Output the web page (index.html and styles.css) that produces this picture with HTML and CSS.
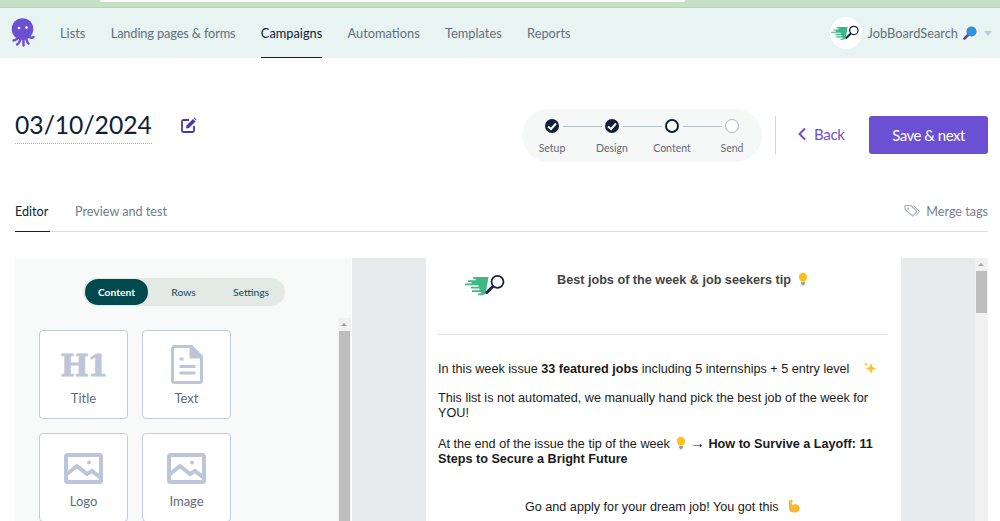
FILE: index.html
```html
<!DOCTYPE html>
<html lang="en">
<head>
<meta charset="utf-8">
<title>Campaign editor</title>
<link rel="stylesheet" href="styles.css">
<svg class="defs" width="0" height="0" aria-hidden="true">
  <defs>
    <symbol id="brand" viewBox="0 0 41 23">
      <path fill="#3fb984" d="M8 3h15.500l-2.800 16.800-3.200 1.400H13v-1.600h3.200v-1.700H7v-1.700h7.500v-1.700H6v-1.700h7.500v-1.500H0V9.600h6.500V8H3V6.300h7.500V4.800H8z"/>
      <circle cx="32.500" cy="7.800" r="6" fill="#fff" stroke="#14233f" stroke-width="1.800"/>
      <path d="M27.800 12.500l-6 6" stroke="#14233f" stroke-width="3" stroke-linecap="round"/>
    </symbol>
    <symbol id="bulb" viewBox="0 0 12 16">
      <path fill="#fcc21b" d="M6 .5a5 5 0 0 0-5 5c0 2.200 1.600 3.200 2.200 5.200h5.600c.6-2 2.200-3 2.200-5.200a5 5 0 0 0-5-5z"/>
      <path fill="#9a9a9a" d="M3.800 11.200h4.400v2.400L7 15.500H5l-1.200-1.900z"/>
    </symbol>
    <symbol id="picture" viewBox="0 0 39 31">
      <rect x="2" y="2" width="35" height="27" rx="1.500" fill="none" stroke="#bdc6d8" stroke-width="4"/>
      <path d="M3 21l10-8 10 8 5-3 9 7" fill="none" stroke="#bdc6d8" stroke-width="4"/>
      <circle cx="25" cy="9.500" r="2" fill="#bdc6d8"/>
    </symbol>
  </defs>
</svg>
</head>
<body>
<div class="browser-strip"><div class="address"></div></div>
<nav class="topnav">
  <svg class="octopus" viewBox="0 0 24 30" width="24" height="30" aria-hidden="true">
    <g fill="none" stroke="#6c50d4" stroke-width="2.400" stroke-linecap="round">
      <path d="M7 18c0 3-2 4-4.500 4.500"/><path d="M9.500 19c0 3-1 6-3.500 7.500"/><path d="M12.500 19v8.500"/><path d="M15 19c.5 3 1 5.500 2.500 6.500"/><path d="M17.500 17c1 3 3 3.500 5 2"/>
    </g>
    <circle cx="11.500" cy="11" r="10.800" fill="#6c50d4"/>
    <circle cx="8" cy="10" r="1.300" fill="#fff"/><circle cx="15.500" cy="9.500" r="1.300" fill="#fff"/>
  </svg>
  <a class="nav-link">Lists</a>
  <a class="nav-link tight">Landing pages &amp; forms</a>
  <a class="nav-link active">Campaigns</a>
  <a class="nav-link">Automations</a>
  <a class="nav-link">Templates</a>
  <a class="nav-link">Reports</a>
  <div class="account">
    <span class="avatar"><svg width="29" height="16"><use href="#brand"/></svg></span>
    <span class="account-name">JobBoardSearch</span>
    <svg class="account-glass" viewBox="0 0 14 14" width="14" height="14" aria-hidden="true">
      <path d="M5 9l-3.500 3.500" stroke="#6b3fa0" stroke-width="2.600" stroke-linecap="round"/>
      <circle cx="8.500" cy="5.500" r="4.500" fill="#1e9be8" stroke="#6b6fa8" stroke-width="1.200"/>
    </svg>
    <span class="caret"></span>
  </div>
</nav>

<header class="page-head">
  <div class="title-group">
    <h1 class="campaign-title">03/10/2024</h1>
    <svg class="edit-icon" viewBox="0 0 16 16" width="16" height="16" aria-hidden="true">
      <path d="M8 3H2.500A1.500 1.500 0 0 0 1 4.500v9A1.500 1.500 0 0 0 2.500 15h9a1.500 1.500 0 0 0 1.500-1.500V9" fill="none" stroke="#4a37b4" stroke-width="1.800"/>
      <path d="M5.500 8.500L12 2l2.500 2.500L8 11l-3 .5z" fill="#4a37b4"/>
      <path d="M12.800 1.200l.7-.7 2 2-.7.700z" fill="#4a37b4"/>
    </svg>
  </div>
  <div class="actions">
    <div class="stepper">
      <div class="step"><span class="dot done"><svg viewBox="0 0 14 14" width="14" height="14"><path d="M3 7.500l3 2.500 5-5.500" fill="none" stroke="#fff" stroke-width="2"/></svg></span><span class="step-label">Setup</span></div>
      <div class="step"><span class="dot done"><svg viewBox="0 0 14 14" width="14" height="14"><path d="M3 7.500l3 2.500 5-5.500" fill="none" stroke="#fff" stroke-width="2"/></svg></span><span class="step-label">Design</span></div>
      <div class="step"><span class="dot current"></span><span class="step-label">Content</span></div>
      <div class="step last"><span class="dot todo"></span><span class="step-label">Send</span></div>
    </div>
    <span class="vrule"></span>
    <a class="back"><svg viewBox="0 0 10 14" width="10" height="14" aria-hidden="true"><path d="M8 1.500L2.500 7 8 12.500" fill="none" stroke="#6c50d4" stroke-width="2"/></svg>Back</a>
    <button class="save">Save &amp; next</button>
  </div>
</header>

<div class="tabs">
  <a class="tab active">Editor</a>
  <a class="tab">Preview and test</a>
  <a class="merge">
    <svg viewBox="0 0 16 14" width="16" height="14" aria-hidden="true"><path d="M1 1.500h6l6 6-4.500 4.500-7.500-6.500z" fill="none" stroke="#a9b1bf" stroke-width="1.100"/><path d="M9.500 1.500l6 6-4 4.500" fill="none" stroke="#a9b1bf" stroke-width="1"/><circle cx="4" cy="4.500" r="1" fill="#a9b1bf"/></svg>
    Merge tags
  </a>
</div>

<main class="editor">
  <aside class="sidebar">
    <div class="segmented">
      <span class="seg active">Content</span>
      <span class="seg rows">Rows</span>
      <span class="seg settings">Settings</span>
    </div>
    <div class="side-body">
      <div class="blocks">
        <div class="block">
          <span class="h1-icon">H1</span>
          <span class="block-label">Title</span>
        </div>
        <div class="block">
          <svg class="block-icon" viewBox="0 0 32 39" width="32" height="39" aria-hidden="true">
            <path d="M3.500 1.500h17l10 10v24a2 2 0 0 1-2 2h-25a2 2 0 0 1-2-2v-32a2 2 0 0 1 2-2z" fill="none" stroke="#bdc6d8" stroke-width="3"/>
            <path d="M20 1.500v10.500h10.500z" fill="#bdc6d8" stroke="#bdc6d8" stroke-width="3"/>
            <path d="M8.500 14h4M8.500 21.500h16M8.500 28h16" stroke="#bdc6d8" stroke-width="3"/>
          </svg>
          <span class="block-label">Text</span>
        </div>
        <div class="block">
          <svg class="block-icon pic" width="39" height="31" aria-hidden="true"><use href="#picture"/></svg>
          <span class="block-label">Logo</span>
        </div>
        <div class="block">
          <svg class="block-icon pic" width="39" height="31" aria-hidden="true"><use href="#picture"/></svg>
          <span class="block-label">Image</span>
        </div>
      </div>
      <div class="scrollbar side-scroll"><span class="sb-btn"></span><span class="sb-thumb"></span></div>
    </div>
  </aside>
  <section class="canvas">
    <article class="email">
      <div class="email-head">
        <svg class="email-logo" width="41" height="23" aria-hidden="true"><use href="#brand"/></svg>
        <p class="email-title">Best jobs of the week &amp; job seekers tip <svg class="emoji bulb-title" width="10" height="14"><use href="#bulb"/></svg></p>
      </div>
      <hr class="email-rule">
      <p class="copy">In this week issue <b>33 featured jobs</b> including 5 internships + 5 entry level <svg class="emoji sparkle" viewBox="0 0 14 14" width="14" height="14"><path fill="#fdc331" d="M8 2l1.500 4L13.500 7.500 9.500 9 8 13 6.500 9 2.500 7.500 6.500 6zM3 1l.6 1.600L5.200 3.200 3.600 3.800 3 5.400 2.400 3.800.8 3.200 2.400 2.600z"/></svg></p>
      <p class="copy">This list is not automated, we manually hand pick the best job of the week for YOU!</p>
      <p class="copy tip">At the end of the issue the tip of the week <svg class="emoji" width="10" height="14"><use href="#bulb"/></svg> <span class="arrow">→</span> <b>How to Survive a Layoff: 11 Steps to Secure a Bright Future</b></p>
      <p class="copy center">Go and apply for your dream job! You got this <svg class="emoji muscle" viewBox="0 0 14 14" width="14" height="14"><path fill="#fbb72d" d="M2 1.500l3-.8 1 1.500-1.500 1 .8 3.300c1.500-1.600 4-1.800 5.700-.6 2.200 1.500 2.200 5 .3 6.500-1.500 1.100-5 1.300-7.300.6-1.500-.5-1.600-1.500-1.700-3C2 7.500 1.500 4 2 1.500z"/></svg></p>
    </article>
    <div class="scrollbar canvas-scroll"><span class="sb-btn"></span><span class="sb-thumb"></span></div>
  </section>
</main>
</body>
</html>
```

FILE: styles.css
```css
* { box-sizing: border-box; }
html, body { margin: 0; padding: 0; }
body {
  width: 1000px;
  height: 521px;
  overflow: hidden;
  background: #fff;
  font-family: Lato, "Liberation Sans", sans-serif;
  color: #0f2038;
}
.defs { position: absolute; }
.browser-strip {
  height: 8px;
  background: #c6e0c5;
  border-bottom: 1px solid #b9d2b9;
  padding-left: 100px;
}
.address {
  width: 585px;
  height: 2px;
  background: #fff;
  border-radius: 0 0 6px 6px;
}
.topnav {
  height: 50px;
  background: #e8f4f1;
  display: flex;
  align-items: stretch;
  padding: 0 8px 0 11px;
}
.octopus { align-self: center; margin: 0 25px 0 0; }
.nav-link {
  display: flex;
  align-items: center;
  font-size: 12.800px;
  color: #5f6f80;
  margin-right: 25.400px;
  padding-top: 1px;
  border-bottom: 1px solid transparent;
}
.nav-link.tight { letter-spacing: -0.14px; }
.nav-link.active { color: #0f2038; border-bottom-color: #0f2038; }
.account { margin-left: auto; display: flex; align-items: center; }
.avatar {
  width: 32px;
  height: 32px;
  border-radius: 50%;
  background: #fff;
  display: flex;
  align-items: center;
  justify-content: center;
  margin: 0 6px 0 0;
}
.account-name { font-size: 12.800px; color: #5f6f80; }
.account-glass { margin-left: 5px; }
.caret {
  width: 0;
  height: 0;
  margin-left: 7px;
  border-left: 4px solid transparent;
  border-right: 4px solid transparent;
  border-top: 5px solid #c5cbd4;
}

.page-head {
  height: 120px;
  padding: 51px 12px 0 15px;
  display: flex;
  justify-content: space-between;
  align-items: flex-start;
}
.title-group { display: flex; align-items: center; }
.campaign-title {
  margin: 0;
  font-size: 24.700px;
  font-weight: 400;
  line-height: 32px;
  height: 35px;
  border-bottom: 1px dotted #a9b3cf;
  color: #0f2038;
}
.edit-icon { margin: 0 0 3px 29px; }
.actions { display: flex; align-items: center; }
.stepper {
  display: flex;
  width: 240px;
  height: 53px;
  background: #f6f8f8;
  border-radius: 27px;
  padding: 10px 0 0 0;
  justify-content: center;
}
.step {
  width: 60px;
  display: flex;
  flex-direction: column;
  align-items: center;
  position: relative;
}
.step::after {
  content: "";
  position: absolute;
  top: 7px;
  left: 41px;
  width: 39px;
  height: 1px;
  background: #b5bfce;
}
.step.last::after { display: none; }
.dot {
  width: 14px;
  height: 14px;
  border-radius: 50%;
  display: block;
  margin-bottom: 8px;
}
.dot svg { display: block; }
.dot.done { background: #0f2038; }
.dot.current { border: 2px solid #0f2038; background: #fff; }
.dot.todo { border: 1px solid #a9b3c8; background: #fff; }
.step-label { font-size: 10.500px; line-height: 14px; color: #5f6b78; }
.vrule { width: 1px; height: 38px; background: #d2d6da; margin: 0 21px 1px 13px; }
.back {
  display: flex;
  align-items: center;
  gap: 7px;
  font-size: 15px;
  letter-spacing: -0.3px;
  color: #6c50d4;
  width: 72px;
  margin-bottom: 3px;
}
.save {
  width: 119px;
  height: 38px;
  border: 0;
  border-radius: 3px;
  background: #6c50d4;
  color: #fff;
  font: 400 15px Lato, sans-serif;
  letter-spacing: -0.5px;
  margin-bottom: 1px;
}

.tabs {
  margin: 22px 12px 0 15px;
  height: 32px;
  display: flex;
  align-items: flex-start;
  border-bottom: 1px solid #d8dee6;
  font-size: 12.600px;
}
.tab {
  height: 32px;
  line-height: 24px;
  padding-top: 0;
  color: #6f7b8a;
  margin-right: 25px;
}
.tab.active { color: #0f2038; border-bottom: 1px solid #0f2038; width: 35px; }
.merge {
  margin-left: auto;
  display: flex;
  align-items: center;
  gap: 6px;
  height: 22px;
  color: #76818f;
}

.editor {
  margin: 26px 12px 0 15px;
  height: 263px;
  display: flex;
  overflow: hidden;
}
.sidebar {
  width: 336px;
  flex: none;
  background: #f8faf9;
  padding-top: 20px;
  display: flex;
  flex-direction: column;
}
.segmented {
  align-self: flex-start;
  margin-left: 68px;
  width: 202px;
  height: 28px;
  border-radius: 14px;
  background: #e3eae5;
  display: flex;
  align-items: center;
  padding-left: 2px;
  font-size: 10.300px;
  font-weight: 700;
  color: #0b4a4f;
}
.seg { display: block; text-align: center; }
.seg.active {
  width: 63px;
  height: 26px;
  line-height: 26px;
  border-radius: 13px;
  background: #004a4d;
  color: #fff;
}
.seg.rows { width: 71px; font-weight: 400; }
.seg.settings { width: 64px; font-weight: 400; white-space: nowrap; }
.side-body {
  flex: 1;
  display: flex;
  justify-content: space-between;
  padding: 12px 0 0 24px;
  min-height: 0;
}
.blocks {
  margin-top: 12px;
  display: grid;
  grid-template-columns: 89px 89px;
  grid-auto-rows: 89px;
  gap: 14px;
  height: 192px;
  align-content: start;
}
.block {
  background: #fff;
  border: 1px solid #c3cbdc;
  border-radius: 4px;
  display: flex;
  flex-direction: column;
  align-items: center;
  height: 89px;
}
.h1-icon {
  height: 40px;
  margin-top: 14px;
  font: 700 30px/42px "DejaVu Serif", serif;
  color: #bdc6d8;
  letter-spacing: -1.500px;
  -webkit-text-stroke: 0.8px #bdc6d8;
}
.block-icon { display: block; margin-top: 14px; }
.block-icon.pic { margin-top: 19px; margin-bottom: 4px; }
.block-label { font-size: 13px; line-height: 16px; color: #5f6b78; margin-top: 5px; }
.block-icon + .block-label { margin-top: 6px; }
.block-icon.pic + .block-label { margin-top: 5px; }

.scrollbar {
  display: flex;
  flex-direction: column;
  flex: none;
  width: 13px;
  background: #f1f1f1;
}
.sb-btn { height: 13px; position: relative; display: block; }
.sb-btn::after {
  content: "";
  position: absolute;
  left: 3px;
  top: 5px;
  border-left: 3px solid transparent;
  border-right: 3px solid transparent;
  border-bottom: 3px solid #a5a5a5;
}
.sb-thumb { display: block; background: #bebebe; }
.side-scroll { margin-left: auto; }
.side-scroll .sb-thumb { flex: 1; margin: 0 1px; }
.canvas-scroll { margin-left: auto; }
.canvas-scroll .sb-thumb { height: 42px; margin: 0 1px; }

.canvas {
  flex: 1;
  background: #e9eaec;
  margin-left: 1px;
  padding-left: 74px;
  display: flex;
  font-family: "Liberation Sans", Arial, sans-serif;
}
.email {
  width: 475px;
  flex: none;
  height: 400px;
  background: #fff;
  padding: 0 13px 0 12px;
  color: #1a1a1a;
  font-size: 12.650px;
  line-height: 15px;
}
.email-head { display: flex; height: 76px; }
.email-logo { margin: 16px 0 0 27px; flex: none; }
.email-title { margin: 14px 0 0 51px; font-weight: 700; color: #444; white-space: nowrap; }
.emoji { vertical-align: -2px; margin-left: 3px; }
.emoji.bulb-title { margin-left: 4px; }
.emoji.sparkle { margin-left: 10px; }
.emoji.muscle { margin-left: 5px; }
.arrow { font-size: 15px; line-height: 1; }
.email-rule { margin: 0 0 26px; border: 0; border-top: 1px solid #e3e1de; }
.copy { margin: 0 0 14px; }
.copy.tip { margin-top: 13px; }
.copy.center { text-align: center; margin-top: 32px; }
```
